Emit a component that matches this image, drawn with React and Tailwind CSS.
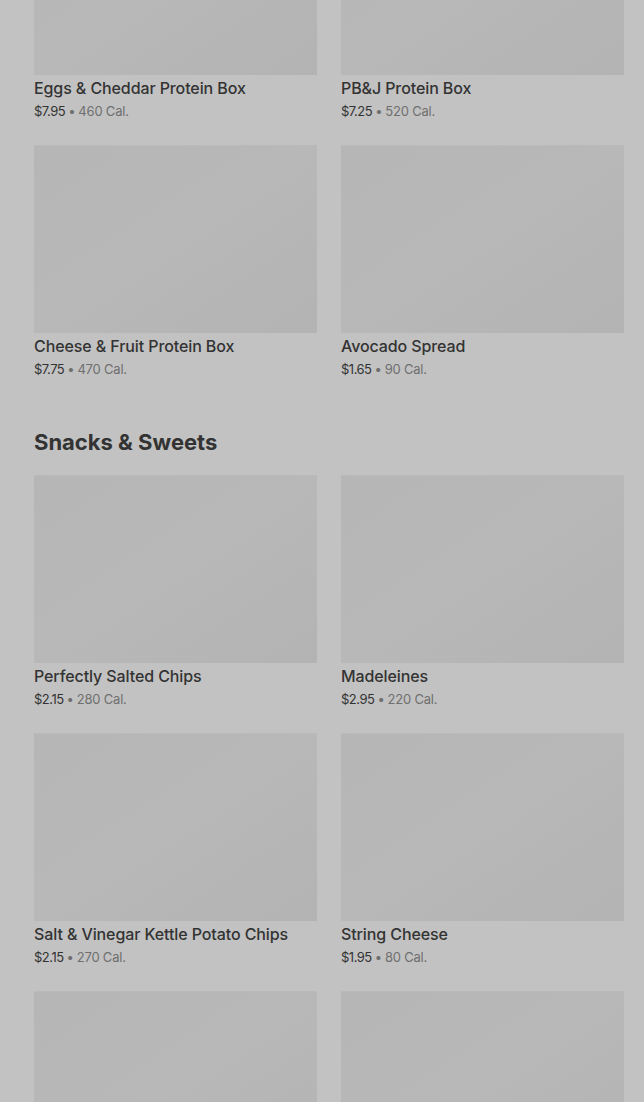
import React from 'react';

const breakfast = [
  { name: 'Eggs & Cheddar Protein Box', price: '$7.95', cal: '460 Cal.' },
  { name: 'PB&J Protein Box', price: '$7.25', cal: '520 Cal.' },
  { name: 'Cheese & Fruit Protein Box', price: '$7.75', cal: '470 Cal.' },
  { name: 'Avocado Spread', price: '$1.65', cal: '90 Cal.' },
];

const snacks = [
  { name: 'Perfectly Salted Chips', price: '$2.15', cal: '280 Cal.' },
  { name: 'Madeleines', price: '$2.95', cal: '220 Cal.' },
  { name: 'Salt & Vinegar Kettle Potato Chips', price: '$2.15', cal: '270 Cal.' },
  { name: 'String Cheese', price: '$1.95', cal: '80 Cal.' },
  { name: 'snack-5' },
  { name: 'snack-6' },
];

const ItemCard = ({ item }) => (
  <div className="flex flex-col">
    <div className="h-[188px] bg-gradient-to-br from-[#b6b6b6] via-[#b8b8b8] to-[#b3b3b3] border-t border-[#bababa]" />
    {item.price && (
      <>
        <div className="mt-[3px] text-[16px] leading-[20px] font-medium text-[#333333] tracking-[-0.1px]">
          {item.name}
        </div>
        <div className="mt-1 text-[13px] leading-[18px] text-[#6f6f6f] tracking-[-0.2px]">
          <span className="text-[#333333] tracking-[-0.5px]">{item.price}</span>
          <span className="mx-[3px]">•</span>
          {item.cal}
        </div>
      </>
    )}
  </div>
);

export default function App() {
  return (
    <div
      className="h-[1102px] overflow-hidden bg-[#c2c2c2]"
      style={{ fontFamily: 'Inter, "Liberation Sans", sans-serif' }}
    >
      <div className="-mt-[113px] pl-[34px] pr-[20px]">
        <div className="grid grid-cols-[283px_283px] gap-x-[24px] gap-y-[25px]">
          {breakfast.map((item) => (
            <ItemCard key={item.name} item={item} />
          ))}
        </div>

        <h2 className="mt-[50px] mb-[19px] text-[22px] leading-[28px] font-bold text-[#333333]">
          Snacks &amp; Sweets
        </h2>

        <div className="grid grid-cols-[283px_283px] gap-x-[24px] gap-y-[25px]">
          {snacks.map((item) => (
            <ItemCard key={item.name} item={item} />
          ))}
        </div>
      </div>
    </div>
  );
}
